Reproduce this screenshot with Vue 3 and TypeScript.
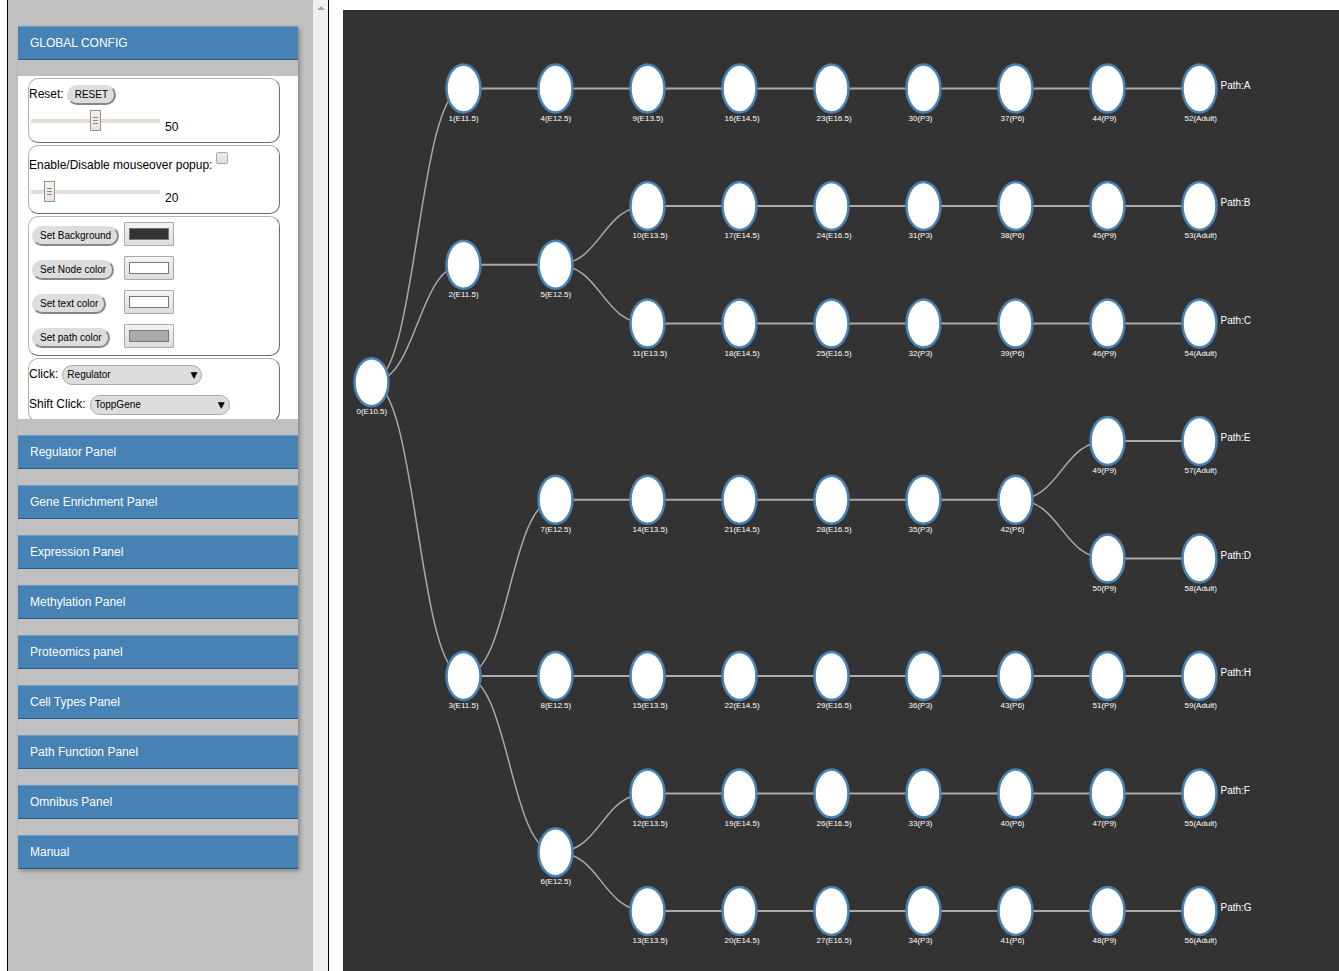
<script setup lang="ts">
import { computed, ref } from 'vue'

interface TreeNode {
  id: number
  stage: number
  row: number
}

interface Lane {
  row: number
  firstStage: number
  ids: number[]
  path?: string
}

const resetValue = ref(50)
const sizeValue = ref(20)
const popup = ref(false)
const clickAction = ref('Regulator')
const shiftAction = ref('ToppGene')

const colors = ref([
  { id: 'background', label: 'Set Background', value: '#333333' },
  { id: 'node', label: 'Set Node color', value: '#ffffff' },
  { id: 'text', label: 'Set text color', value: '#ffffff' },
  { id: 'path', label: 'Set path color', value: '#aaaaaa' },
])

const panels = [
  'Regulator Panel',
  'Gene Enrichment Panel',
  'Expression Panel',
  'Methylation Panel',
  'Proteomics panel',
  'Cell Types Panel',
  'Path Function Panel',
  'Omnibus Panel',
  'Manual',
]

const stages = ['E10.5', 'E11.5', 'E12.5', 'E13.5', 'E14.5', 'E16.5', 'P3', 'P6', 'P9', 'Adult']

const lanes: Lane[] = [
  { row: 2.5, firstStage: 0, ids: [0] },
  { row: 0, firstStage: 1, ids: [1, 4, 9, 16, 23, 30, 37, 44, 52], path: 'Path:A' },
  { row: 1.5, firstStage: 1, ids: [2, 5] },
  { row: 1, firstStage: 3, ids: [10, 17, 24, 31, 38, 45, 53], path: 'Path:B' },
  { row: 2, firstStage: 3, ids: [11, 18, 25, 32, 39, 46, 54], path: 'Path:C' },
  { row: 3.5, firstStage: 2, ids: [7, 14, 21, 28, 35, 42] },
  { row: 3, firstStage: 8, ids: [49, 57], path: 'Path:E' },
  { row: 4, firstStage: 8, ids: [50, 58], path: 'Path:D' },
  { row: 5, firstStage: 1, ids: [3, 8, 15, 22, 29, 36, 43, 51, 59], path: 'Path:H' },
  { row: 6.5, firstStage: 2, ids: [6] },
  { row: 6, firstStage: 3, ids: [12, 19, 26, 33, 40, 47, 55], path: 'Path:F' },
  { row: 7, firstStage: 3, ids: [13, 20, 27, 34, 41, 48, 56], path: 'Path:G' },
]

const branches: [number, number][] = [
  [0, 1], [0, 2], [0, 3], [5, 10], [5, 11], [3, 7], [3, 6], [42, 49], [42, 50], [6, 12], [6, 13],
]

const px = (stage: number) => 28.5 + stage * 92
const py = (row: number) => 78.5 + row * 117.5

const nodes = computed<TreeNode[]>(() =>
  lanes.flatMap((lane) => lane.ids.map((id, i) => ({ id, stage: lane.firstStage + i, row: lane.row }))),
)

const straightLinks = computed(() =>
  lanes.flatMap((lane) =>
    lane.ids.slice(1).map((id, i) => ({
      id,
      x1: px(lane.firstStage + i),
      x2: px(lane.firstStage + i + 1),
      y: py(lane.row),
    })),
  ),
)

const curves = computed(() =>
  branches.map(([from, to]) => {
    const a = nodes.value.find((n) => n.id === from)!
    const b = nodes.value.find((n) => n.id === to)!
    const mid = (px(a.stage) + px(b.stage)) / 2
    return `M${px(a.stage)},${py(a.row)}C${mid},${py(a.row)} ${mid},${py(b.row)} ${px(b.stage)},${py(b.row)}`
  }),
)

const paths = lanes.filter((lane) => lane.path)
</script>

<template>
  <div class="page">
    <aside class="sidebar">
      <div class="sidebar-body">
        <div class="accordion">
          <button type="button" class="header">GLOBAL CONFIG</button>
          <section class="config">
            <div class="box">
              <div class="line reset-line">
                <label for="reset-range">Reset:</label>
                <button type="button" class="pill">RESET</button>
              </div>
              <div class="range-line">
                <input id="reset-range" v-model="resetValue" class="range" type="range" min="0" max="100" />
                <output for="reset-range">{{ resetValue }}</output>
              </div>
            </div>
            <div class="box">
              <div class="line popup-line">
                <label for="popup">Enable/Disable mouseover popup:</label>
                <input id="popup" v-model="popup" class="check" type="checkbox" />
              </div>
              <div class="range-line">
                <input id="size-range" v-model="sizeValue" class="range" type="range" min="10" max="100" aria-label="Size" />
                <output for="size-range">{{ sizeValue }}</output>
              </div>
            </div>
            <div class="box color-box">
              <div v-for="c in colors" :key="c.id" class="color-line">
                <div class="color-action"><button type="button" class="pill">{{ c.label }}</button></div>
                <input v-model="c.value" class="color" type="color" :aria-label="c.label" />
              </div>
            </div>
            <div class="box select-box">
              <div class="select-line">
                <label for="click">Click:</label>
                <span class="select-wrap">
                  <select id="click" v-model="clickAction"><option>Regulator</option></select>
                </span>
              </div>
              <div class="select-line">
                <label for="shift-click">Shift Click:</label>
                <span class="select-wrap">
                  <select id="shift-click" v-model="shiftAction"><option>ToppGene</option></select>
                </span>
              </div>
            </div>
          </section>
          <button v-for="p in panels" :key="p" type="button" class="header">{{ p }}</button>
        </div>
      </div>
      <div class="track">
        <svg width="8" height="4" viewBox="0 0 8 4" aria-hidden="true"><path d="M4 0L8 4H0Z" fill="#a3a3a3" /></svg>
      </div>
    </aside>
    <main class="canvas">
      <svg class="tree" width="996" height="961">
        <path v-for="d in curves" :key="d" class="curve" :d="d" />
        <line v-for="l in straightLinks" :key="l.id" class="link" :x1="l.x1" :x2="l.x2" :y1="l.y" :y2="l.y" />
        <g v-for="n in nodes" :key="n.id">
          <ellipse class="node" :cx="px(n.stage)" :cy="py(n.row)" rx="17" ry="24" />
          <text class="node-label" :x="px(n.stage) - 15" :y="py(n.row) + 32">{{ n.id }}({{ stages[n.stage] }})</text>
        </g>
        <text v-for="p in paths" :key="p.path" class="path-label" :x="px(9) + 21" :y="py(p.row)">{{ p.path }}</text>
      </svg>
    </main>
  </div>
</template>

<style>
body {
  margin: 0;
  background: #fff;
}
</style>

<style scoped>
* {
  box-sizing: border-box;
}
.page {
  display: flex;
  gap: 14px;
  height: 100vh;
  padding-left: 7px;
  overflow: hidden;
  font: 12px/14px "Liberation Sans", Arial, sans-serif;
  color: #000;
}
.sidebar {
  display: flex;
  flex: none;
  width: 322px;
  background: #c0c0c0;
  border: solid #000;
  border-width: 0 1px;
}
.sidebar-body {
  flex: 1;
  padding: 26px 15px 0 10px;
}
.track {
  display: flex;
  justify-content: center;
  width: 15px;
  padding-top: 6px;
  background: #f0f0f0;
}
.accordion {
  display: flex;
  flex-direction: column;
  gap: 16px;
  background: #c0c0c0;
  box-shadow: 2px 2px 4px rgba(0, 0, 0, 0.3);
}
.header {
  height: 34px;
  padding: 0 12px;
  border: 0;
  border-top: 1px solid #6b9ac4;
  border-bottom: 1px solid #2c5a85;
  background: #4682b4;
  color: #fff;
  font: inherit;
  text-align: left;
}
.config {
  display: flex;
  flex-direction: column;
  gap: 2px;
  height: 343px;
  padding: 2px 18px 0 10px;
  overflow: hidden;
  background: #fff;
}
.box {
  flex: none;
  border: 1px solid;
  border-color: #b4b4b4 #6b6b6b #6b6b6b #b4b4b4;
  border-radius: 10px;
  padding: 6px 0 11px;
}
.line,
.select-line {
  display: flex;
  align-items: center;
  gap: 4px;
}
.reset-line {
  gap: 3px;
  height: 20px;
}
.reset-line label {
  margin-bottom: 2px;
}
.popup-line {
  align-items: flex-start;
  height: 24px;
}
.popup-line label {
  padding-top: 6px;
}
.pill {
  height: 20px;
  padding: 0 6px;
  border: 2px solid;
  border-color: #ddd #888 #888 #ddd;
  border-radius: 10px;
  background: #ddd;
  color: #000;
  font: 10px/14px "Liberation Sans", Arial, sans-serif;
}
.range-line {
  display: flex;
  align-items: flex-end;
  gap: 5px;
  padding: 5px 0 0 2px;
}
.range-line output {
  margin-bottom: -3px;
}
.range {
  appearance: none;
  width: 129px;
  height: 21px;
  margin: 0;
  background: transparent;
}
.range::-webkit-slider-runnable-track {
  height: 4px;
  background: #e3ddd8;
}
.range::-webkit-slider-thumb {
  appearance: none;
  width: 11px;
  height: 21px;
  margin-top: -9px;
  border: 1px solid #9b948c;
  background:
    linear-gradient(#8e8780, #8e8780) 2px 6px / 5px 1px no-repeat,
    linear-gradient(#8e8780, #8e8780) 2px 9px / 5px 1px no-repeat,
    linear-gradient(#8e8780, #8e8780) 2px 12px / 5px 1px no-repeat,
    linear-gradient(#f5f2ef, #e8e3df);
}
.check {
  appearance: none;
  width: 12px;
  height: 12px;
  margin: 0;
  border: 1px solid #a9a9a9;
  border-radius: 2px;
  background: linear-gradient(#eee, #ddd);
}
.color-box {
  display: flex;
  flex-direction: column;
  gap: 10px;
  padding: 5px 3px 7px;
}
.color-line {
  display: flex;
}
.color-action {
  display: flex;
  align-items: flex-end;
  width: 92px;
  height: 24px;
}
.color {
  appearance: none;
  width: 50px;
  height: 24px;
  padding: 5px 4px;
  border: 1px solid #a9a9a9;
  border-radius: 1px;
  background: linear-gradient(#f4f4f4, #ddd);
}
.color::-webkit-color-swatch-wrapper {
  padding: 0;
}
.color::-webkit-color-swatch {
  border: 1px solid #777;
  border-radius: 0;
}
.select-box {
  display: flex;
  flex-direction: column;
  gap: 10px;
  padding-bottom: 6px;
}
.select-line label {
  margin-bottom: 2px;
}
.select-wrap {
  position: relative;
}
.select-wrap::after {
  content: "▼";
  position: absolute;
  top: 3px;
  right: 5px;
  font: 9px/14px "DejaVu Sans", sans-serif;
  pointer-events: none;
}
select {
  display: block;
  appearance: none;
  width: 140px;
  height: 20px;
  padding: 0 4px;
  border: 1px solid #a9a9a9;
  border-radius: 10px;
  background: #ddd;
  color: #000;
  font: 10px/14px "Liberation Sans", Arial, sans-serif;
}
.canvas {
  flex: 1;
  min-width: 0;
  margin-top: 10px;
  overflow: hidden;
  background: #333;
}
.tree {
  display: block;
}
.curve {
  fill: none;
  stroke: #aaa;
  stroke-width: 1.5;
}
.link {
  stroke: #aaa;
  stroke-width: 2;
}
.node {
  fill: #fff;
  stroke: #4682b4;
  stroke-width: 2.5;
}
.node-label,
.path-label {
  fill: #fff;
  font-family: "Liberation Sans", Arial, sans-serif;
}
.node-label {
  font-size: 8px;
}
.path-label {
  font-size: 10px;
}
</style>
